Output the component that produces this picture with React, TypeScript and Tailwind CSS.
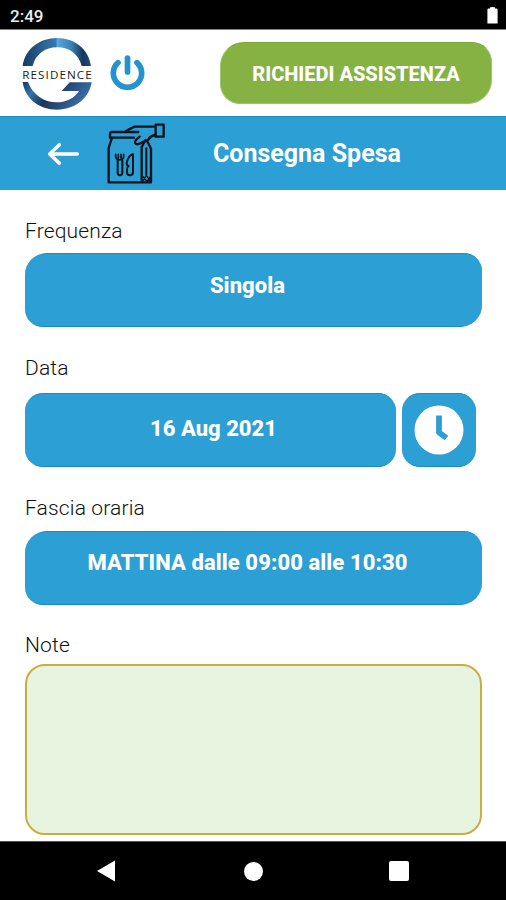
import type { ReactNode } from 'react';

function StatusBar() {
  return (
    <div className="flex h-[30px] items-center justify-between border-b border-[#7c7c7c] bg-black pl-[10px] pr-2 text-white">
      <span className="pt-[3px] text-[17px] font-medium leading-5 text-[#ededed]">2:49</span>
      <svg width="11" height="18" viewBox="0 0 11 18" fill="white">
        <path d="M3 1.6 Q3 1 5.5 1 Q8 1 8 1.6 V2.6 H9.4 Q10.6 2.6 10.6 4 V17.4 H0.4 V4 Q0.4 2.6 1.6 2.6 H3Z" />
      </svg>
    </div>
  );
}

function Logo() {
  return (
    <svg className="ml-[21px]" width="72" height="74" viewBox="63 105 216 222">
      <defs>
        <linearGradient id="ringTop" x1="0" x2="1" y1="0" y2="0">
          <stop offset="0" stopColor="#173b63" />
          <stop offset="0.3" stopColor="#2c6294" />
          <stop offset="0.49" stopColor="#347bb0" />
          <stop offset="0.5" stopColor="#58a9dc" />
          <stop offset="0.72" stopColor="#397fb6" />
          <stop offset="0.88" stopColor="#16365c" />
          <stop offset="1" stopColor="#234e7c" />
        </linearGradient>
        <linearGradient id="ringBottom" x1="0" x2="1" y1="0" y2="0.3">
          <stop offset="0" stopColor="#163962" />
          <stop offset="0.22" stopColor="#3474a8" />
          <stop offset="0.48" stopColor="#1b3558" />
          <stop offset="0.75" stopColor="#2c5384" />
          <stop offset="1" stopColor="#3a6fa6" />
        </linearGradient>
      </defs>
      <path d="M68 195 C75 144 118 111 171 111 C224 111 266 144 273 195 L245 195 C236 160 209 139 172 139 C135 139 107 160 98 195Z" fill="url(#ringTop)" />
      <path d="M68 243 L84 243 C98 280 130 304 171 304 C199 304 224 291 237 270 L185 270 L209 244 L275 244 C268 292 224 326 171 326 C117 326 75 293 68 243Z" fill="url(#ringBottom)" />
      <text x="67" y="233" fontSize="35" textLength="208" lengthAdjust="spacing" fill="#202020" fontFamily="'Open Sans', sans-serif">RESIDENCE</text>
    </svg>
  );
}

function PowerIcon() {
  return (
    <svg className="ml-[17px]" width="36" height="36" viewBox="330 167 108 108" fill="none" stroke="#2494cf" strokeWidth="17" strokeLinecap="round">
      <path d="M354 190 A42.5 42.5 0 1 0 411 190" />
      <path d="M382.500 176 V218" />
    </svg>
  );
}

function Header() {
  return (
    <header className="flex h-[86px] items-center bg-white">
      <Logo />
      <PowerIcon />
      <button className="ml-auto mr-[14px] h-[62px] w-[272px] whitespace-nowrap rounded-bl-[20px] rounded-br-[24px] rounded-tl-[24px] rounded-tr-[20px] border border-[#9cc46a] border-t-[#7bab32] bg-[#86b143] pt-[1px] text-[20px] font-extrabold text-white">
        RICHIEDI ASSISTENZA
      </button>
    </header>
  );
}

function BagIcon() {
  return (
    <svg className="ml-[25px]" width="62" height="63" viewBox="225 24 186 189" fill="none" stroke="#06151d" strokeWidth="7" strokeLinejoin="round" strokeLinecap="round">
      <rect x="377" y="32" width="24" height="36" />
      <path d="M375 38 H314 Q301 44 288 51" />
      <path d="M375 63 Q361 66 355 77 Q348 82 338 84 Q322 95 316 88 Q311 82 329 68" />
      <path d="M325 54 H246 Q240 54 240 61 V71 H312" />
      <path d="M245 74 L236 102 V205 H363 V104 L351 80" />
      <path d="M335 98 V204 M335 100 L346 78" />
      <path d="M349 103 V181" strokeWidth="6" />
      <path d="M339 188 L351 203 L361 188 M338 202 L349 184 L361 202" strokeWidth="4" />
      <path d="M257 121 V129 Q258 137 269 138 Q280 137 281 129 V121 M265 121 V133 M273 121 V133" strokeWidth="5" />
      <path d="M263 139 V175 Q263 184 270 184 Q277 184 277 175 V139" strokeWidth="6" />
      <path d="M308 121 Q295 124 290 147 Q289 154 296 156 Q290 160 291 175 Q291 184 300 184 Q309 184 309 175 V121Z" strokeWidth="6" />
    </svg>
  );
}

function TitleBar() {
  return (
    <div className="flex h-[74px] items-center border-t border-[#168dc7] bg-[#2c9fd4]">
      <svg className="ml-[46px]" width="34" height="26" viewBox="48 82 102 78" fill="none" stroke="white" strokeWidth="10.5" strokeLinecap="round" strokeLinejoin="round">
        <path d="M142 121 H60 M88 93 L59 121 L88 149" />
      </svg>
      <BagIcon />
      <h1 className="ml-[46px] whitespace-nowrap pt-px text-[25px] font-bold leading-7 text-white">Consegna Spesa</h1>
    </div>
  );
}

function Label({ children }: { children: ReactNode }) {
  return <div className="whitespace-nowrap pt-px text-[21px] font-light leading-6 tracking-[0.15px] text-[#111]">{children}</div>;
}

function Choice({ children }: { children: ReactNode }) {
  return (
    <button className="flex h-[74px] w-full items-center justify-center whitespace-nowrap rounded-bl-[18px] rounded-br-[22px] rounded-tl-[22px] rounded-tr-[18px] border-y border-b-[#168dc7] border-t-[#168dc7] bg-[#2c9fd4] text-[22px] font-extrabold tracking-[0.08px] text-white">
      {children}
    </button>
  );
}

function ClockIcon() {
  return (
    <svg width="50" height="50" viewBox="0 0 50 50" fill="none">
      <circle cx="25" cy="25" r="24.5" fill="white" />
      <path d="M25 10.5 V27.500 L32.500 33" stroke="#2c9fd4" strokeWidth="5.8" strokeLinejoin="round" />
    </svg>
  );
}

function NavBar() {
  return (
    <nav className="flex h-[59px] items-center border-t border-[#555] bg-black">
      <svg className="ml-[97px]" width="18" height="22" viewBox="0 0 18 22" fill="white">
        <path d="M18 0.5 V21.5 L0 11Z" />
      </svg>
      <div className="ml-[129px] size-[19px] rounded-full bg-white" />
      <div className="ml-[126px] size-[20px] rounded-[2px] bg-white" />
    </nav>
  );
}

export default function App() {
  return (
    <div className="flex h-[900px] w-[506px] flex-col overflow-hidden bg-white font-['Roboto',sans-serif]">
      <StatusBar />
      <Header />
      <TitleBar />
      <main className="flex h-[651px] flex-col pl-[25px] pr-6">
        <div className="mt-[28px]"><Label>Frequenza</Label></div>
        <div className="mt-[10px]">
          <Choice><span className="pb-[10px] pr-[12px]">Singola</span></Choice>
        </div>
        <div className="mt-[28px]"><Label>Data</Label></div>
        <div className="mt-[13px] flex gap-[6px]">
          <button className="h-[74px] w-[371px] whitespace-nowrap rounded-[18px] border-y border-[#168dc7] bg-[#2c9fd4] pb-[4px] pl-[6px] text-[22px] font-extrabold text-white">16 Aug 2021</button>
          <button className="flex size-[74px] items-center justify-center rounded-[18px] border-y border-[#168dc7] bg-[#2c9fd4]"><ClockIcon /></button>
        </div>
        <div className="mt-[28px]"><Label>Fascia oraria</Label></div>
        <div className="mt-[11px]">
          <Choice><span className="pb-[11px] pr-[12px]">MATTINA dalle 09:00 alle 10:30</span></Choice>
        </div>
        <div className="mt-[27px]"><Label>Note</Label></div>
        <textarea className="mt-[7px] h-[171px] w-full shrink-0 resize-none rounded-[20px] border-2 border-[#c9ae45] bg-[#e7f4e0] p-3 outline-none" />
      </main>
      <NavBar />
    </div>
  );
}
